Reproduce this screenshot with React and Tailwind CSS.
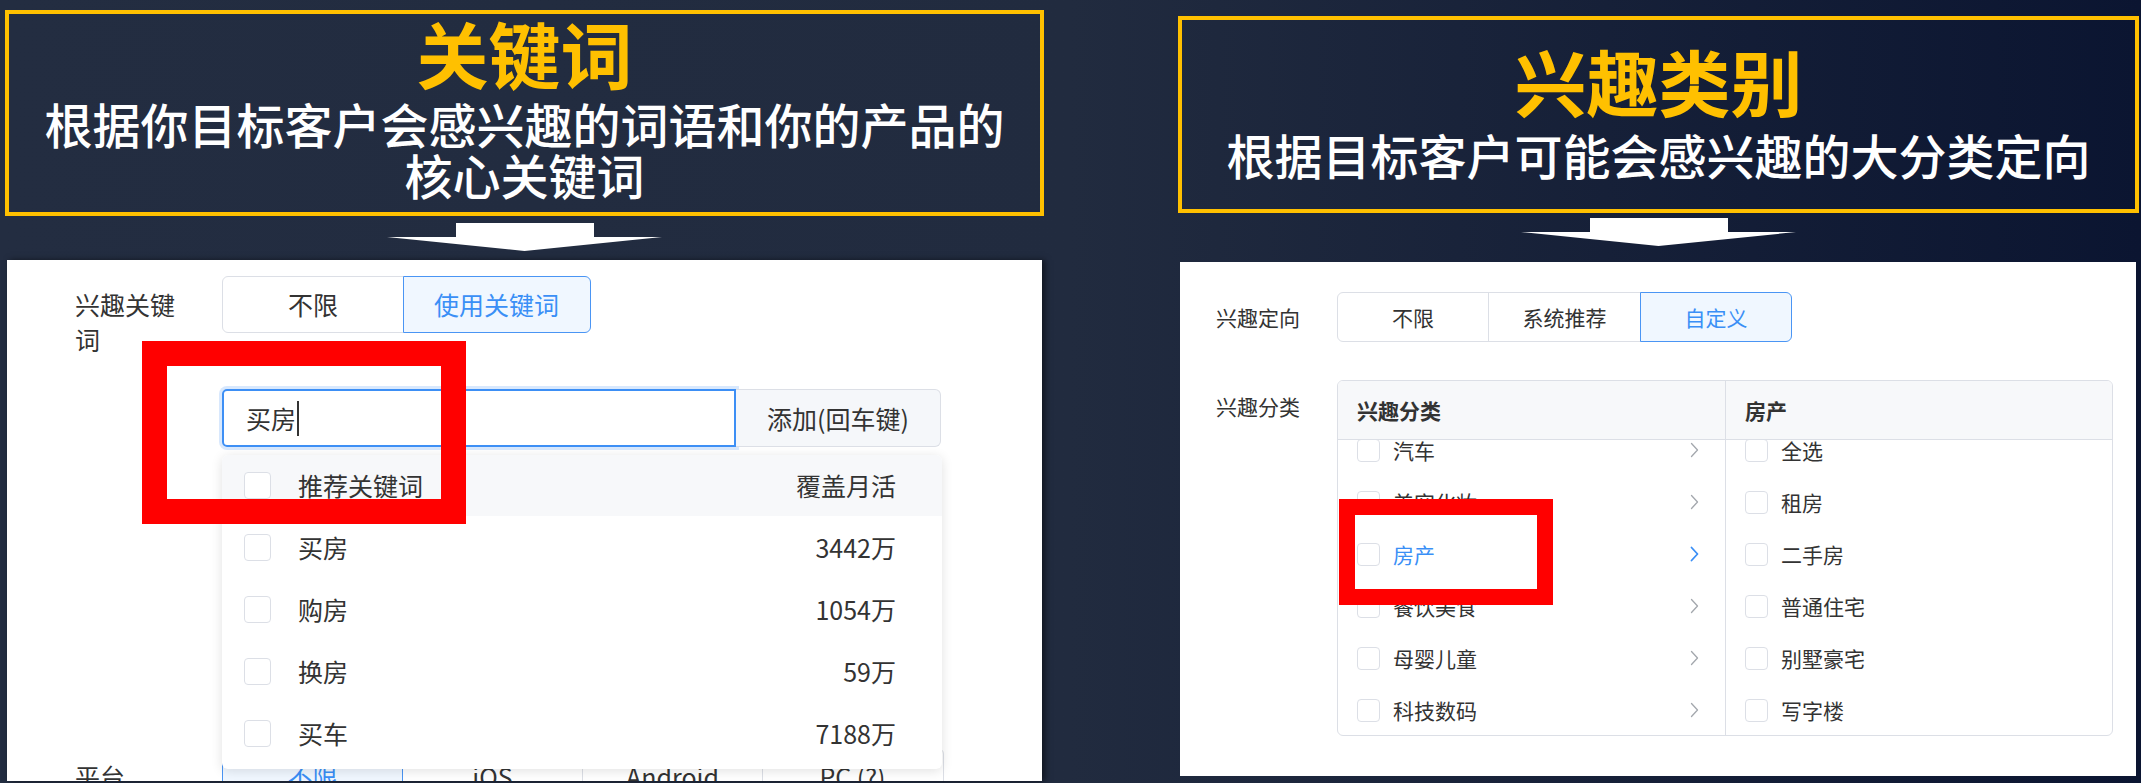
import React from "react";

function DownArrow() {
  return (
    <svg width="275" height="28" viewBox="0 0 275 28">
      <path d="M69 0H207V14H275L137.5 28L0 14H69Z" fill="#ffffff" />
    </svg>
  );
}

function Check({ big }) {
  return (
    <span
      className={`inline-block shrink-0 rounded-[4px] border-[1.5px] border-[#dcdfe6] bg-white ${
        big ? "h-[27px] w-[27px]" : "h-[23px] w-[23px]"
      }`}
    />
  );
}

function Chevron({ active }) {
  return (
    <svg width="9" height="16" viewBox="0 0 9 16" className="shrink-0">
      <polyline
        points="1.5,1.5 7.5,8 1.5,14.5"
        fill="none"
        stroke={active ? "#3a8ff6" : "#a3a7ad"}
        strokeWidth={active ? "1.8" : "1.3"}
        strokeLinecap="round"
        strokeLinejoin="round"
      />
    </svg>
  );
}

function Segmented({ items, active, widths, height }) {
  return (
    <div className={`flex ${height}`}>
      {items.map((it, i) => {
        const on = i === active;
        return (
          <div
            key={it}
            className={`flex h-full items-center justify-center border-[1.5px] ${widths[i]} ${
              i > 0 ? "-ml-[1.5px]" : "rounded-l-[6px]"
            } ${i === items.length - 1 ? "rounded-r-[6px]" : ""} ${
              on
                ? "relative z-[1] border-[#4a95f4] bg-[#f0f7ff] text-[#3a8ff6]"
                : "border-[#dcdfe6] bg-white"
            }`}
          >
            {it}
          </div>
        );
      })}
    </div>
  );
}

const keywords = [
  ["买房", "3442万"],
  ["购房", "1054万"],
  ["换房", "59万"],
  ["买车", "7188万"],
];

const cats = ["汽车", "美容化妆", "房产", "餐饮美食", "母婴儿童", "科技数码"];
const subs = ["全选", "租房", "二手房", "普通住宅", "别墅豪宅", "写字楼"];

export default function App() {
  return (
    <div className="flex h-[783px] w-[2141px] items-start overflow-hidden bg-[linear-gradient(90deg,#232d41_0%,#212b3f_50%,#0b1531_100%)] font-['Noto_Sans_CJK_SC',sans-serif]">
      {/* left: keywords */}
      <div className="ml-[5px] flex w-[1039px] flex-col items-center">
        <div className="mt-[10px] flex h-[206px] w-full flex-col items-center border-[4px] border-[#ffc000] text-center">
          <div className="-mt-[2px] text-[72px] font-bold leading-[80px] text-[#ffc000]">关键词</div>
          <div className="mt-[6px] w-[980px] text-[48px] font-medium leading-[51px] text-white">
            根据你目标客户会感兴趣的词语和你的产品的核心关键词
          </div>
        </div>
        <div className="mt-[7px] flex">
          <DownArrow />
        </div>
        <div className="relative mt-[9px] ml-[2px] h-[521px] w-[1035px] self-start overflow-hidden bg-white pl-[68px] pt-[16px] text-[25px] leading-[35px] text-[#333] shadow-[3px_0_6px_rgba(0,0,0,0.5)]">
          <div className="flex h-[57px] items-start">
            <div className="w-[147px] pr-[37px] pt-[11px]">兴趣关键词</div>
            <Segmented
              items={["不限", "使用关键词"]}
              active={1}
              widths={["w-[182px]", "w-[188px]"]}
              height="h-[57px]"
            />
          </div>

          <div className="relative ml-[147px] mt-[56px] flex h-[58px] w-[719px]">
            <div className="flex h-full w-[514px] items-center rounded-l-[5px] border-2 border-[#3d8ff5] pl-[22px] shadow-[0_0_0_3px_#d8e8fd]">
              <span>买房</span>
              <span className="ml-[1px] inline-block h-[35px] w-[2px] bg-[#333]" />
            </div>
            <div className="flex h-full flex-1 items-center justify-center rounded-r-[6px] border-[1.5px] border-l-0 border-[#dcdfe6] bg-[#f5f7fa]">
              添加(回车键)
            </div>

            <div className="absolute left-0 top-[66px] z-10 h-[314px] w-[720px] overflow-hidden rounded-[6px] bg-white shadow-[0_2px_12px_rgba(0,0,0,0.12)]">
              <div className="flex h-[61px] items-center bg-[#f7f8fa] pl-[22px] pr-[46px]">
                <Check big />
                <span className="ml-[27px] flex-1">推荐关键词</span>
                <span>覆盖月活</span>
              </div>
              {keywords.map(([k, v]) => (
                <div key={k} className="flex h-[62px] items-center pl-[22px] pr-[46px]">
                  <Check big />
                  <span className="ml-[27px] flex-1">{k}</span>
                  <span>{v}</span>
                </div>
              ))}
            </div>
          </div>

          <div className="mt-[301px] flex h-[57px] items-center">
            <div className="w-[147px]">平台</div>
            <Segmented
              items={["不限", "iOS", "Android", "PC (?)"]}
              active={0}
              widths={["w-[181px]", "w-[182px]", "w-[181px]", "w-[182px]"]}
              height="h-[57px]"
            />
          </div>

          <div className="absolute left-[135px] top-[81px] z-20 h-[183px] w-[324px] border-[25px] border-[#ff0000]" />
        </div>
      </div>

      {/* right: interest categories */}
      <div className="ml-[134px] flex w-[961px] flex-col items-center">
        <div className="mt-[16px] flex h-[197px] w-full flex-col items-center border-[4px] border-[#ffc000] text-center">
          <div className="mt-[20px] text-[72px] font-bold leading-[80px] text-[#ffc000]">兴趣类别</div>
          <div className="mt-[9px] text-[48px] font-medium leading-[51px] text-white">
            根据目标客户可能会感兴趣的大分类定向
          </div>
        </div>
        <div className="mt-[5px] flex">
          <DownArrow />
        </div>
        <div className="relative mt-[16px] ml-[2px] h-[514px] w-[956px] self-start overflow-hidden bg-white pl-[36px] pt-[30px] text-[21px] leading-[30px] text-[#333]">
          <div className="flex h-[50px] items-center">
            <div className="w-[121px]">兴趣定向</div>
            <Segmented
              items={["不限", "系统推荐", "自定义"]}
              active={2}
              widths={["w-[152px]", "w-[154px]", "w-[152px]"]}
              height="h-[50px]"
            />
          </div>

          <div className="mt-[38px] flex items-start">
            <div className="w-[121px] pt-[11px]">兴趣分类</div>
            <div className="flex h-[356px] w-[776px] overflow-hidden rounded-[6px] border-[1.5px] border-[#dcdfe6]">
              <div className="flex w-[388px] flex-col border-r-[1.5px] border-[#dcdfe6]">
                <div className="flex h-[59px] shrink-0 items-center border-b-[1.5px] border-[#dcdfe6] bg-[#f7f8fa] pl-[19px] font-bold">
                  兴趣分类
                </div>
                <div className="flex-1 overflow-hidden">
                  <div className="-mt-[16px]">
                    {cats.map((c) => (
                      <div key={c} className="flex h-[52px] items-center pl-[19px] pr-[26px]">
                        <Check />
                        <span className={`ml-[13px] flex-1 ${c === "房产" ? "text-[#3a8ff6]" : ""}`}>{c}</span>
                        <Chevron active={c === "房产"} />
                      </div>
                    ))}
                  </div>
                </div>
              </div>
              <div className="flex flex-1 flex-col">
                <div className="flex h-[59px] shrink-0 items-center border-b-[1.5px] border-[#dcdfe6] bg-[#f7f8fa] pl-[19px] font-bold">
                  房产
                </div>
                <div className="flex-1 overflow-hidden">
                  <div className="-mt-[16px]">
                    {subs.map((s) => (
                      <div key={s} className="flex h-[52px] items-center pl-[19px]">
                        <Check />
                        <span className="ml-[13px]">{s}</span>
                      </div>
                    ))}
                  </div>
                </div>
              </div>
            </div>
          </div>

          <div className="absolute left-[159px] top-[237px] z-20 h-[106px] w-[214px] border-[16px] border-[#ff0000]" />
        </div>
      </div>
    </div>
  );
}
